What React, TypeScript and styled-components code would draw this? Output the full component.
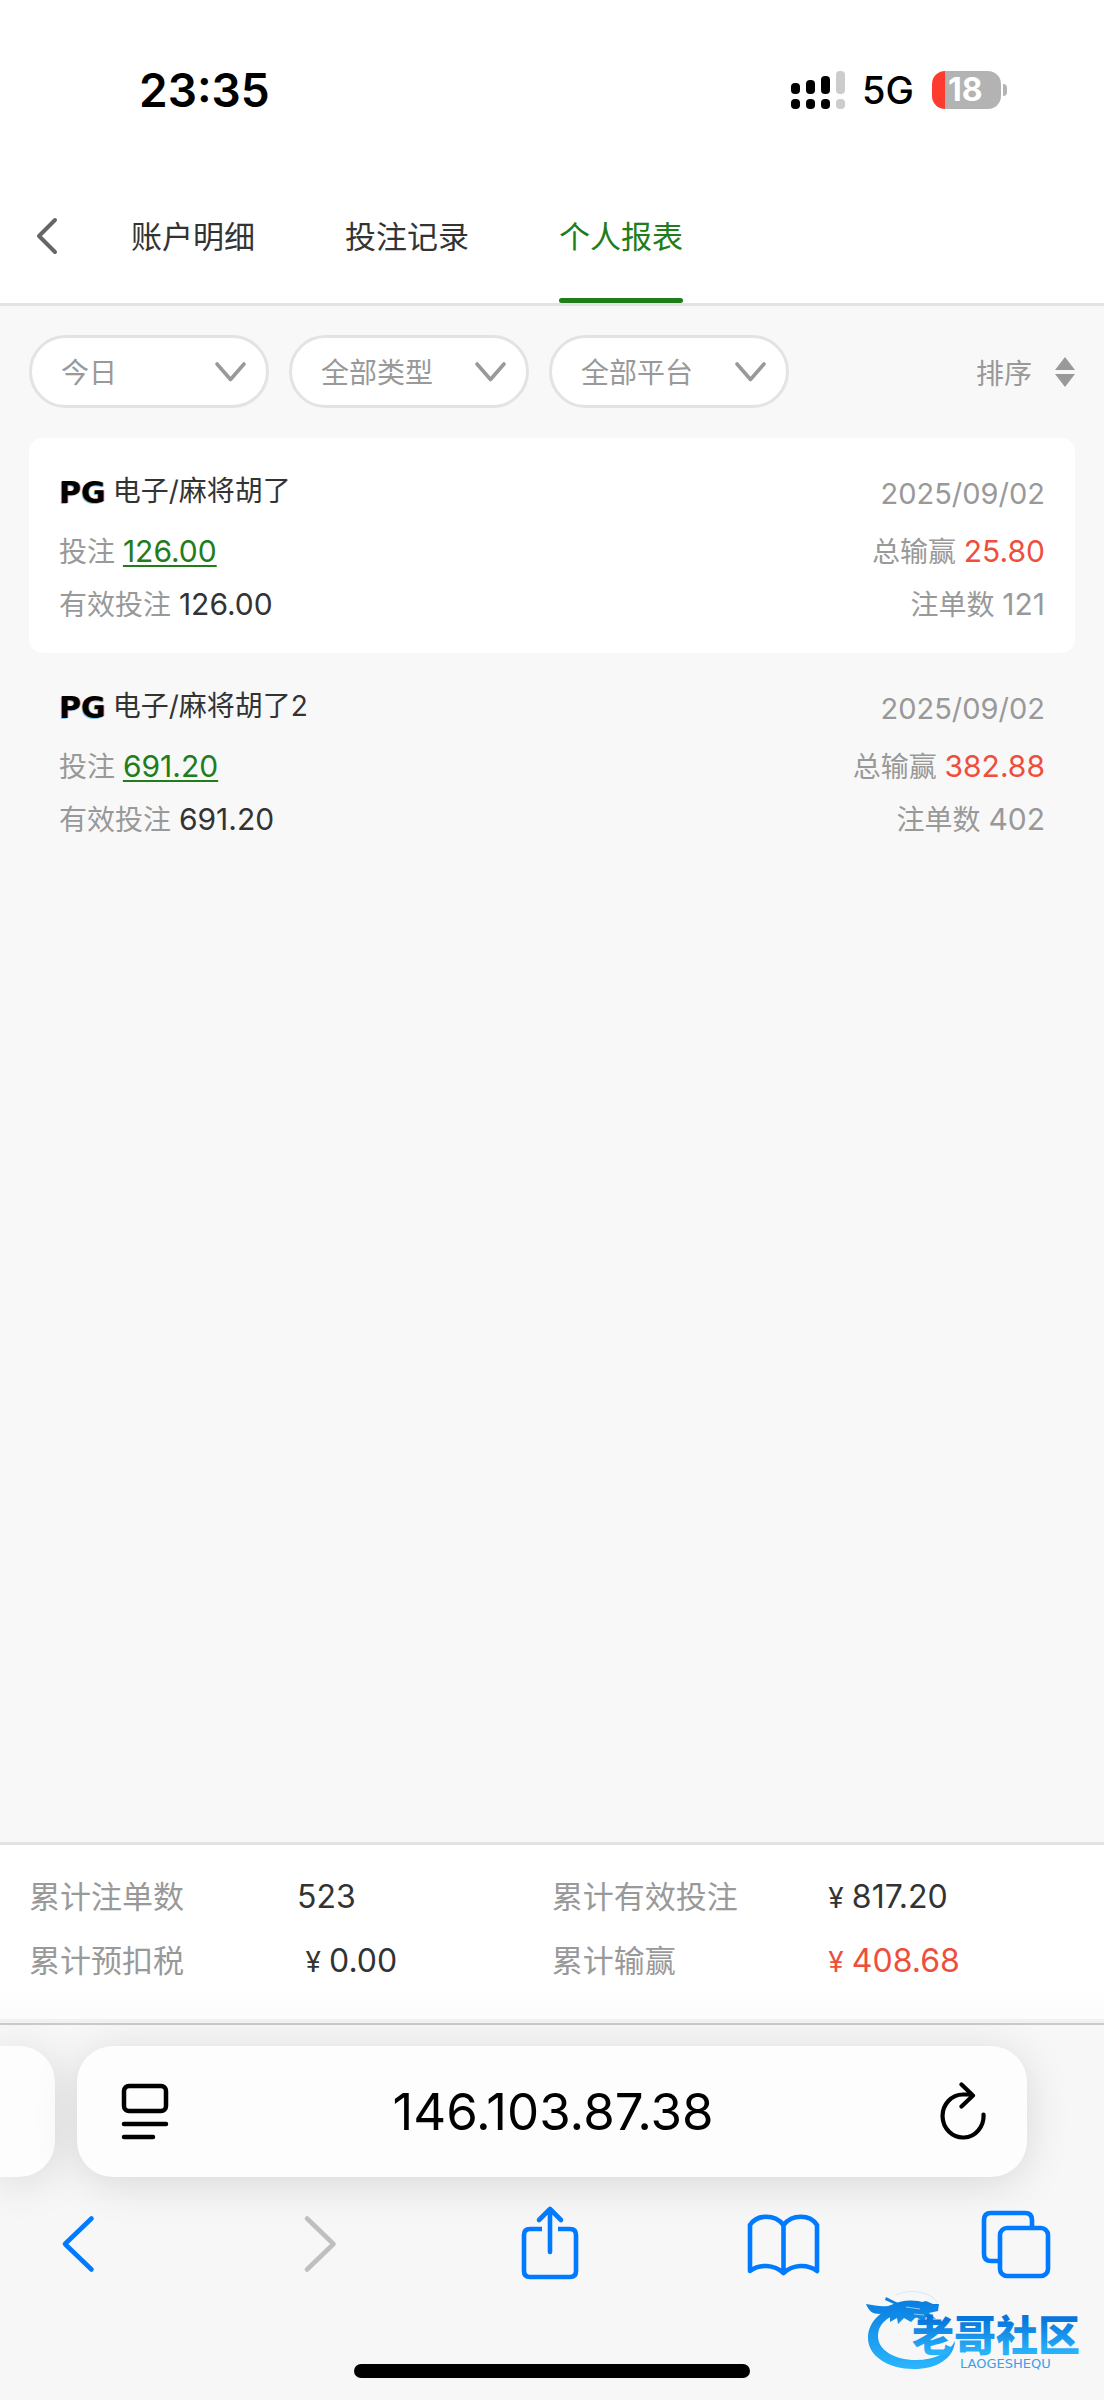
import React, { useState } from "react";
import styled, { createGlobalStyle } from "styled-components";

const colors = {
  green: "#217c1b",
  red: "#ee4f3c",
  text: "#333333",
  muted: "#999999",
  line: "#e3e3e3",
  page: "#f8f8f8",
  blue: "#007aff",
};

const GlobalStyle = createGlobalStyle`
  *, *::before, *::after { box-sizing: border-box; }
  body {
    margin: 0;
    background: ${colors.page};
    color: ${colors.text};
    font-family: Inter, "Noto Sans CJK SC", sans-serif;
  }
  button, select, input { font: inherit; color: inherit; }
  button { border: 0; padding: 0; background: none; cursor: pointer; }
`;

const Screen = styled.div`
  position: relative;
  display: flex;
  flex-direction: column;
  min-height: 100vh;
`;

const StatusBar = styled.div`
  display: flex;
  align-items: center;
  height: 180px;
  padding: 0 97px 0 139px;
  background: #fff;
  color: #000;
`;

const Clock = styled.time`
  flex: 1;
  font-size: 46px;
  font-weight: 600;
`;

const Network = styled.span`
  margin: 0 18px 0 17px;
  font-size: 38px;
  font-weight: 500;
`;

const Battery = styled.div`
  display: flex;
  align-items: center;
  gap: 2px;
`;

const BatteryBody = styled.span`
  width: 69px;
  height: 38px;
  padding-left: 16px;
  border-radius: 13px;
  background: linear-gradient(to right, #ff3b30 13px, #b3b3b3 13px);
  color: #fff;
  font-size: 32px;
  font-weight: 700;
  line-height: 38px;
`;

const BatteryTip = styled.span`
  width: 4px;
  height: 12px;
  border-radius: 0 4px 4px 0;
  background: #b3b3b3;
`;

const Header = styled.header`
  display: flex;
  align-items: flex-start;
  border-bottom: 3px solid ${colors.line};
  background: #fff;
`;

const BackButton = styled.button`
  display: flex;
  align-items: center;
  width: 131px;
  height: 112px;
  padding-left: 35px;
`;

const Tabs = styled.nav`
  display: flex;
  gap: 90px;
`;

const Tab = styled.button<{ $active: boolean }>`
  padding-top: 33px;
  color: ${(p) => (p.$active ? colors.green : colors.text)};
  font-size: 31px;
  line-height: 48px;

  &::after {
    content: "";
    display: block;
    height: 5px;
    margin-top: 37px;
    border-radius: 3px;
    background: ${(p) => (p.$active ? colors.green : "transparent")};
  }
`;

const Filters = styled.div`
  display: flex;
  align-items: center;
  gap: 20px;
  padding: 29px 29px 30px;
  color: ${colors.muted};
  font-size: 28px;
`;

const FilterBox = styled.label`
  display: flex;
  align-items: center;
  flex: 0 1 240px;
  height: 73px;
  padding: 2px 19px 0 29px;
  border: 3px solid ${colors.line};
  border-radius: 37px;
  background: #fff;
`;

const FilterSelect = styled.select`
  flex: 1;
  min-width: 0;
  border: 0;
  outline: 0;
  padding: 0;
  appearance: none;
  background: transparent;
  line-height: 44px;
`;

const SortButton = styled.button`
  display: flex;
  align-items: center;
  gap: 23px;
  margin-left: auto;
`;

const List = styled.main`
  flex: 1;
  padding: 0 29px;
`;

const Card = styled.article<{ $filled: boolean }>`
  padding: 33px 30px 28px;
  border-radius: 14px;
  background: ${(p) => (p.$filled ? "#fff" : "transparent")};
  color: ${colors.muted};
  font-size: 28px;
  line-height: 40px;
`;

const CardHead = styled.div`
  display: flex;
  align-items: flex-end;
  justify-content: space-between;
  margin-bottom: 21px;
`;

const Title = styled.h2`
  display: flex;
  align-items: center;
  gap: 7px;
  margin: 0;
  color: ${colors.text};
  font-size: 28px;
  font-weight: 400;
`;

const Provider = styled.span`
  padding-top: 4px;
  color: #000;
  font-family: "DejaVu Sans", sans-serif;
  font-size: 30px;
  font-weight: 700;
  line-height: 36px;
  text-shadow: 1px 0 #ff9a5f, -1px 1px #7accff;
`;

const DateText = styled.time`
  font-size: 29px;
  line-height: 34px;
`;

const CardRow = styled.div`
  display: flex;
  justify-content: space-between;

  & + & { margin-top: 13px; }
`;

const Value = styled.span<{ $tone?: "red" | "muted" }>`
  font-size: 30px;
  line-height: 30px;
  color: ${(p) => (p.$tone === "red" ? colors.red : p.$tone === "muted" ? colors.muted : colors.text)};
`;

const BetLink = styled.a`
  color: ${colors.green};
  font-size: 30px;
  line-height: 30px;
  text-decoration: underline;
  text-decoration-thickness: 2px;
  text-underline-offset: 3px;
`;

const Summary = styled.dl`
  display: grid;
  grid-template-columns: 1fr 0.95fr 1fr 1.06fr;
  row-gap: 20px;
  margin: 0;
  padding: 30px 0 36px 29px;
  border-top: 3px solid ${colors.line};
  background: linear-gradient(to bottom, #fff 80%, #fcfcfc);
  font-size: 31px;
  line-height: 44px;
`;

const Term = styled.dt`
  color: ${colors.muted};
`;

const Amount = styled.dd<{ $red?: boolean }>`
  margin: 0;
  color: ${(p) => (p.$red ? colors.red : colors.text)};
  font-size: 32px;
`;

const Yen = styled.span`
  display: inline-block;
  width: 32px;
  font-size: 28px;
  line-height: 32px;
  text-align: center;
`;

const Chrome = styled.footer`
  overflow: hidden;
  border-top: 4px solid #f1f1f1;
  background: #f7f7f7;
  color: #000;
`;

const AddressRow = styled.div`
  display: flex;
  gap: 22px;
  padding: 21px 77px 0 0;
  border-top: 2px solid #cbcbcb;
`;

const Pane = styled.div`
  height: 131px;
  background: #fdfdfd;
  box-shadow: 0 6px 44px rgba(0, 0, 0, 0.13);
`;

const PreviousPane = styled(Pane)`
  width: 55px;
  border-radius: 0 36px 36px 0;
`;

const AddressPane = styled(Pane)`
  display: flex;
  flex: 1;
  align-items: center;
  justify-content: space-between;
  min-width: 0;
  padding: 0 38px 0 42px;
  border-radius: 36px;
`;

const AddressInput = styled.input`
  flex: 1;
  min-width: 0;
  border: 0;
  outline: 0;
  padding: 0 6px 0 0;
  background: transparent;
  font-size: 51px;
  line-height: 64px;
  text-align: center;
`;

const IconButton = styled.button`
  display: flex;
  align-items: center;
  justify-content: center;
  color: inherit;

  &:disabled { color: #bfbfbf; }
`;

const Toolbar = styled.nav`
  display: flex;
  justify-content: space-between;
  padding: 28px 50px 0 40px;
  color: ${colors.blue};
`;

const HomeIndicator = styled.div`
  width: 396px;
  height: 14px;
  margin: 83px auto 22px;
  border-radius: 7px;
  background: #000;
`;

const Watermark = styled.div`
  position: absolute;
  right: 12px;
  bottom: 22px;
  pointer-events: none;
`;

const stroke = {
  fill: "none",
  stroke: "currentColor",
  strokeLinecap: "round" as const,
  strokeLinejoin: "round" as const,
};

const Signal = () => (
  <svg width="54" height="38" viewBox="0 0 54 38" aria-hidden="true">
    {[12, 9, 5, 0].map((top, i) => (
      <g key={top} fill={i === 3 ? "#cccccc" : "#000"}>
        <rect x={i * 15} y={top} width="9" height={23 - top} rx="4" />
        <rect x={i * 15} y="28" width="9" height="10" rx="4" />
      </g>
    ))}
  </svg>
);

const Chevron = () => (
  <svg width="33" height="24" viewBox="0 0 33 24" strokeWidth="3.600" {...stroke} aria-hidden="true">
    <path d="M3 3 16.500 18.500 30 3" />
  </svg>
);

const SortIcon = () => (
  <svg width="20" height="30" viewBox="0 0 20 30" fill="#999" aria-hidden="true">
    <path d="M10 0 20 13H0z M10 30 0 17H20z" />
  </svg>
);

const ToolIcon = ({ children }: { children: React.ReactNode }) => (
  <svg width="76" height="76" viewBox="0 0 76 76" strokeWidth="4.600" {...stroke} aria-hidden="true">
    {children}
  </svg>
);

const WatermarkLogo = () => (
  <svg width="228" height="84" viewBox="0 0 228 84" role="img" aria-label="老哥社区">
    <defs>
      <linearGradient id="wave" gradientUnits="userSpaceOnUse" x1="0" y1="14" x2="0" y2="78">
        <stop offset="0" stopColor="#0b80e2" />
        <stop offset="1" stopColor="#2bb5fb" />
      </linearGradient>
      <linearGradient id="ink" gradientUnits="userSpaceOnUse" x1="0" y1="30" x2="0" y2="62">
        <stop offset="0" stopColor="#0877dc" />
        <stop offset="1" stopColor="#28b2fa" />
      </linearGradient>
    </defs>
    <path
      fill="url(#wave)"
      d="M32 16C14 22 4 34 4 48c0 18 20 31 46 31 22 0 40-10 41-28-6 12-21 19-39 19-22 0-38-10-38-24 0-11 8-19 22-23l6-6z"
    />
    <path
      fill="url(#wave)"
      d="M2 14c8 1 14 3 22 2l6-2-9-4 1-3 16 8 7-4 9 2 8-2 7 3 6 0-1 7-9 2 7 6-10-2-2 5-8-5-5 5-7-4-6 6-1-6-7 4 0-5-7 2 4-6-7 1c-8 0-11-3-14-10z"
    />
    <path d="M28 15C36 10 50 9 62 13C70 15 66 24 58 26C48 30 38 28 30 26z" fill="url(#wave)" />
    <path d="M42 17l14 2M50 24l10 1" fill="none" stroke="#8cc8f5" strokeWidth="1" />
    <path
      d="M32 5c10-5 22-4 30-1 6 2 10 5 11 9"
      fill="none"
      stroke="#d3e9fa"
      strokeWidth="1"
    />
    <text
      x="48"
      y="61"
      fill="url(#ink)"
      fontFamily='"Noto Sans CJK SC", sans-serif'
      fontSize="42"
      fontWeight="900"
    >
      老哥社区
    </text>
    <text x="96" y="78" fill="#3b9fe8" fontFamily='"DejaVu Sans", sans-serif' fontSize="13">
      LAOGESHEQU
    </text>
  </svg>
);

const tabs = ["账户明细", "投注记录", "个人报表"];

const filters = [
  { label: "日期", options: ["今日", "昨日", "近七日"] },
  { label: "类型", options: ["全部类型", "电子"] },
  { label: "平台", options: ["全部平台", "PG"] },
];

const records = [
  { title: "电子/麻将胡了", date: "2025/09/02", bet: "126.00", valid: "126.00", win: "25.80", count: "121" },
  { title: "电子/麻将胡了2", date: "2025/09/02", bet: "691.20", valid: "691.20", win: "382.88", count: "402" },
];

const totals = [
  { label: "累计注单数", value: "523" },
  { label: "累计有效投注", value: "817.20", money: true },
  { label: "累计预扣税", value: "0.00", money: true },
  { label: "累计输赢", value: "408.68", money: true, red: true },
];

export default function App() {
  const [active, setActive] = useState(2);

  return (
    <Screen>
      <GlobalStyle />
      <StatusBar>
        <Clock>23:35</Clock>
        <Signal />
        <Network>5G</Network>
        <Battery>
          <BatteryBody>18</BatteryBody>
          <BatteryTip />
        </Battery>
      </StatusBar>

      <Header>
        <BackButton aria-label="返回">
          <svg width="24" height="40" viewBox="0 0 24 40" {...stroke} stroke="#666" strokeWidth="4" aria-hidden="true">
            <path d="M20 4 4 20 20 36" />
          </svg>
        </BackButton>
        <Tabs>
          {tabs.map((name, i) => (
            <Tab key={name} $active={i === active} onClick={() => setActive(i)}>
              {name}
            </Tab>
          ))}
        </Tabs>
      </Header>

      <Filters>
        {filters.map((f) => (
          <FilterBox key={f.label}>
            <FilterSelect aria-label={f.label}>
              {f.options.map((o) => (
                <option key={o}>{o}</option>
              ))}
            </FilterSelect>
            <Chevron />
          </FilterBox>
        ))}
        <SortButton>
          排序
          <SortIcon />
        </SortButton>
      </Filters>

      <List>
        {records.map((r, i) => (
          <Card key={r.title} $filled={i % 2 === 0}>
            <CardHead>
              <Title>
                <Provider>PG</Provider>
                {r.title}
              </Title>
              <DateText>{r.date}</DateText>
            </CardHead>
            <CardRow>
              <span>
                投注 <BetLink href="#bets">{r.bet}</BetLink>
              </span>
              <span>
                总输赢 <Value $tone="red">{r.win}</Value>
              </span>
            </CardRow>
            <CardRow>
              <span>
                有效投注 <Value>{r.valid}</Value>
              </span>
              <span>
                注单数 <Value $tone="muted">{r.count}</Value>
              </span>
            </CardRow>
          </Card>
        ))}
      </List>

      <Summary>
        {totals.map((t) => (
          <React.Fragment key={t.label}>
            <Term>{t.label}</Term>
            <Amount $red={t.red}>
              {t.money && <Yen>¥</Yen>}
              {t.value}
            </Amount>
          </React.Fragment>
        ))}
      </Summary>

      <Chrome>
        <AddressRow>
          <PreviousPane />
          <AddressPane>
            <IconButton aria-label="页面菜单">
              <svg width="54" height="60" viewBox="0 0 54 60" strokeWidth="4.500" {...stroke} aria-hidden="true">
                <rect x="5" y="4" width="42" height="25" rx="5" />
                <path d="M5 42H47M5 55H34" />
              </svg>
            </IconButton>
            <AddressInput aria-label="地址" defaultValue="146.103.87.38" />
            <IconButton aria-label="重新载入">
              <svg width="50" height="60" viewBox="0 0 50 60" strokeWidth="4.200" {...stroke} aria-hidden="true">
                <path d="M44.500 32.500A20.500 21.500 0 1 1 24 12.500H33M22.500 2.500 34 13.500 22.500 24.500" />
              </svg>
            </IconButton>
          </AddressPane>
        </AddressRow>
        <Toolbar>
          <IconButton aria-label="后退">
            <ToolIcon>
              <path d="M51.500 13.500 25 39 51.500 64.500" />
            </ToolIcon>
          </IconButton>
          <IconButton aria-label="前进" disabled>
            <ToolIcon>
              <path d="M32 13.500 58.500 39 32 64.500" />
            </ToolIcon>
          </IconButton>
          <IconButton aria-label="分享">
            <ToolIcon>
              <path strokeLinecap="butt" d="M33 24H21q-6 0-6 6V66q0 6 6 6H61q6 0 6-6V30q0-6-6-6H49" />
              <path d="M41 47V4M30 15 41 4 52 15" />
            </ToolIcon>
          </IconButton>
          <IconButton aria-label="书签">
            <ToolIcon>
              <path d="M39.500 20C31 9 13 9 6 20V66C15 59 30 59 39.500 68 49 59 64 59 73 66V20C66 9 48 9 39.500 20ZV68" />
            </ToolIcon>
          </IconButton>
          <IconButton aria-label="标签页">
            <ToolIcon>
              <rect x="22" y="23" width="48" height="48" rx="7" />
              <path strokeLinecap="butt" d="M22 56H13q-7 0-7-7V15q0-7 7-7H47q7 0 7 7V23" />
            </ToolIcon>
          </IconButton>
        </Toolbar>
        <HomeIndicator />
      </Chrome>

      <Watermark>
        <WatermarkLogo />
      </Watermark>
    </Screen>
  );
}
